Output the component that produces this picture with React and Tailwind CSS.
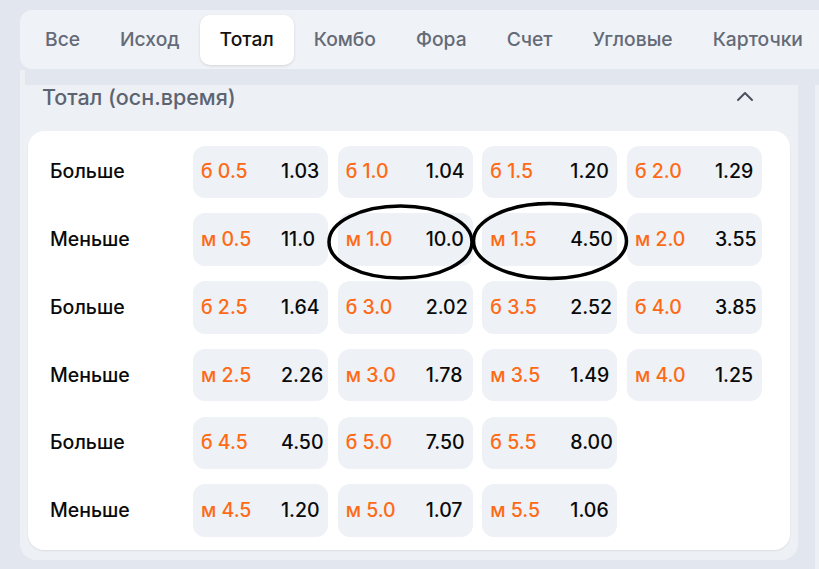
import React from "react";

const tabs = ["Все", "Исход", "Тотал", "Комбо", "Фора", "Счет", "Угловые", "Карточки"];

const rows = [
  ["Больше", [["б 0.5", "1.03"], ["б 1.0", "1.04"], ["б 1.5", "1.20"], ["б 2.0", "1.29"]]],
  ["Меньше", [["м 0.5", "11.0"], ["м 1.0", "10.0"], ["м 1.5", "4.50"], ["м 2.0", "3.55"]]],
  ["Больше", [["б 2.5", "1.64"], ["б 3.0", "2.02"], ["б 3.5", "2.52"], ["б 4.0", "3.85"]]],
  ["Меньше", [["м 2.5", "2.26"], ["м 3.0", "1.78"], ["м 3.5", "1.49"], ["м 4.0", "1.25"]]],
  ["Больше", [["б 4.5", "4.50"], ["б 5.0", "7.50"], ["б 5.5", "8.00"]]],
  ["Меньше", [["м 4.5", "1.20"], ["м 5.0", "1.07"], ["м 5.5", "1.06"]]],
];

export default function App() {
  return (
    <div
      className="relative w-[819px] h-[569px] overflow-hidden bg-[#e2e6ee]"
      style={{ fontFamily: "Inter, 'Noto Sans', sans-serif" }}
    >
      {/* tab bar */}
      <div className="mt-[10px] ml-[20px] w-[820px] h-[59px] rounded-l-[12px] bg-[#eff2f6] flex items-center pl-[5px] whitespace-nowrap">
        {tabs.map((t) => (
          <div
            key={t}
            className={
              t === "Тотал"
                ? "shrink-0 h-[50px] px-[20px] flex items-center rounded-[10px] bg-white shadow-[0_1px_3px_rgba(0,0,0,0.12)] text-[19.25px] font-medium text-[#111]"
                : "shrink-0 h-[50px] px-[20px] flex items-center text-[19.25px] font-medium text-[#646a76]"
            }
          >
            {t}
          </div>
        ))}
      </div>

      {/* band */}
      <div className="h-[16px] flex">
        <div className="ml-[20px] w-[5px] mt-[1px] bg-[#edf0f4]" />
      </div>

      <div className="flex">
        {/* panel */}
        <div className="shrink-0 ml-[20px] w-[778px] h-[475px] bg-[#edf0f4] rounded-b-[16px] px-[8px] flex flex-col">
          <div className="h-[46px] flex items-start justify-between pl-[14px] pr-[36px]">
            <div className="h-[24px] leading-[24px] text-[21.5px] font-medium text-[#5d6471] whitespace-nowrap">
              Тотал (осн.время)
            </div>
            <svg width="18" height="12" viewBox="0 0 18 12" className="mt-[5px]">
              <path d="M2 10 L9 3 L16 10" fill="none" stroke="#4b515c" strokeWidth="2" strokeLinecap="round" strokeLinejoin="round" />
            </svg>
          </div>

          <div className="h-[419px] bg-white rounded-[16px] shadow-[0_1px_2px_rgba(0,0,0,0.08)] pl-[22px] pt-[14.5px] flex flex-col gap-y-[15.3px]">
            {rows.map(([label, cells], i) => (
              <div key={i} className="flex items-center h-[52.5px]">
                <div className="w-[143px] text-[19.5px] font-medium text-[#0a0a0a]">{label}</div>
                <div className="flex gap-x-[9.67px]">
                  {cells.map(([k, v]) => (
                    <div
                      key={k}
                      className="w-[135px] h-[52.5px] rounded-[12px] bg-[#eef1f5] flex items-center text-[19.5px] font-medium whitespace-nowrap"
                    >
                      <div className="w-[88px] pl-[8px] text-[#fe6a16]">{k}</div>
                      <div className="text-[#0a0a0a]">{v}</div>
                    </div>
                  ))}
                </div>
              </div>
            ))}
          </div>
        </div>

        {/* right neighbour panel edge */}
        <div className="shrink-0 ml-[17px] w-[10px] h-[484px] bg-[#edf0f4]" />
      </div>

      {/* hand-drawn annotations */}
      <svg className="absolute left-0 top-0 pointer-events-none" width="819" height="569">
        <ellipse cx="400.5" cy="242" rx="71.5" ry="36" fill="none" stroke="#000" strokeWidth="3.5" />
        <ellipse cx="550" cy="241" rx="76.5" ry="37.5" fill="none" stroke="#000" strokeWidth="3.5" />
      </svg>
    </div>
  );
}
